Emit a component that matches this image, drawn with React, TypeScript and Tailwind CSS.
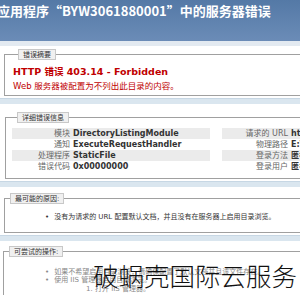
const SANS = "font-['DejaVu_Sans','Noto_Sans_CJK_SC',sans-serif]";

const LEFT_ROWS = [
  { label: '模块', value: 'DirectoryListingModule' },
  { label: '通知', value: 'ExecuteRequestHandler' },
  { label: '处理程序', value: 'StaticFile' },
  { label: '错误代码', value: '0x00000000' },
];

const RIGHT_ROWS = [
  { label: '请求的 URL', value: 'http://' },
  { label: '物理路径', value: 'E:\\' },
  { label: '登录方法', value: '匿名' },
  { label: '登录用户', value: '匿名' },
];

function Band() {
  return <div className="h-[6px] bg-[#dae6ef] border-t border-[#c7d7e4]" />;
}

function Legend({ children }: { children: React.ReactNode }) {
  return (
    <legend className="ml-[5px] px-[4px] h-[11px] leading-[10px] text-[7px] text-[#333] bg-[#f0f0f0] border border-[#c8c8c8]">
      {children}
    </legend>
  );
}

export default function App() {
  return (
    <div className={`relative w-[300px] h-[295px] overflow-hidden bg-white ${SANS}`}>
      {/* Header */}
      <div className="h-[41px] bg-gradient-to-b from-[#5479a6] to-[#6b8cb7]">
        <div className="ml-[-3px] pt-[2px] whitespace-nowrap text-[13px] font-bold leading-[18px] text-white font-['Noto_Sans_CJK_SC',sans-serif]">
          应用程序“BYW3061880001”中的服务器错误
        </div>
      </div>
      <div className="h-[5px] bg-[#e3eaf1]" />

      {/* 错误摘要 */}
      <div className="pl-[4px] pt-[3px] pb-[2px]">
        <fieldset className="w-[320px] h-[47px] border border-[#a0a0a0] pl-[8px]">
          <Legend>错误摘要</Legend>
          <div className="mt-[5px] text-[9.5px] font-bold leading-[13px] text-[#c00000] whitespace-nowrap">
            HTTP 错误 403.14 - Forbidden
          </div>
          <div className="mt-[2px] text-[8.5px] leading-[12px] text-[#c00000] whitespace-nowrap">
            Web 服务器被配置为不列出此目录的内容。
          </div>
        </fieldset>
      </div>
      <Band />

      {/* 详细错误信息 */}
      <div className="pl-[5px] pt-[8px] pb-[2px]">
        <fieldset className="w-[320px] h-[67px] border border-[#a0a0a0] pl-[6px]">
          <Legend>详细错误信息</Legend>
          <div className="mt-[5px] flex gap-[12px] text-[8px] leading-[11px] whitespace-nowrap">
            <div className="w-[198px]">
              {LEFT_ROWS.map((r, i) => (
                <div key={r.label} className={`flex h-[11px] ${i % 2 === 0 ? 'bg-[#ebebeb]' : ''}`}>
                  <span className="w-[58px] text-right text-[#666]">{r.label}</span>
                  <span className="ml-[3px] font-bold text-[#333]">{r.value}</span>
                </div>
              ))}
            </div>
            <div className="w-[120px]">
              {RIGHT_ROWS.map((r, i) => (
                <div key={r.label} className={`flex h-[11px] ${i % 2 === 0 ? 'bg-[#ebebeb]' : ''}`}>
                  <span className="w-[66px] text-right text-[#666]">{r.label}</span>
                  <span className="ml-[3px] font-bold text-[#333]">{r.value}</span>
                </div>
              ))}
            </div>
          </div>
        </fieldset>
      </div>
      <Band />

      {/* 最可能的原因 */}
      <div className="pl-[4px] pt-[6px] pb-[2px]">
        <fieldset className="w-[320px] h-[40px] border border-[#a0a0a0]">
          <Legend>最可能的原因:</Legend>
          <ul className="mt-[9px] ml-[40px] text-[7px] leading-[9px] text-[#333] whitespace-nowrap">
            <li className="flex gap-[5px]">
              <span>•</span>
              <span>没有为请求的 URL 配置默认文档，并且没有在服务器上启用目录浏览。</span>
            </li>
          </ul>
        </fieldset>
      </div>
      <Band />

      {/* 可尝试的操作 */}
      <div className="pl-[3px] pt-[5px]">
        <fieldset className="w-[320px] h-[60px] border border-[#a0a0a0]">
          <Legend>可尝试的操作:</Legend>
          <ul className="mt-[11px] ml-[41px] text-[7px] leading-[8px] text-[#888] whitespace-nowrap">
            <li className="flex gap-[5px]">
              <span>•</span>
              <span>如果不希望启用目录浏览，请确保配置了默认文档并且该文件存在。</span>
            </li>
            <li className="flex gap-[5px]">
              <span>•</span>
              <span>使用 IIS 管理器启用目录浏览。</span>
            </li>
          </ul>
          <div className="mt-[1px] ml-[82px] text-[7px] leading-[9px] text-[#888]">1. 打开 IIS 管理器。</div>
        </fieldset>
      </div>

      {/* Watermark */}
      <div className="absolute left-[93px] top-[258px] whitespace-nowrap text-[25.5px] leading-[34px] text-[#111] font-['Noto_Sans_CJK_SC',sans-serif] font-light">
        破蜗壳国际云服务
      </div>
    </div>
  );
}
